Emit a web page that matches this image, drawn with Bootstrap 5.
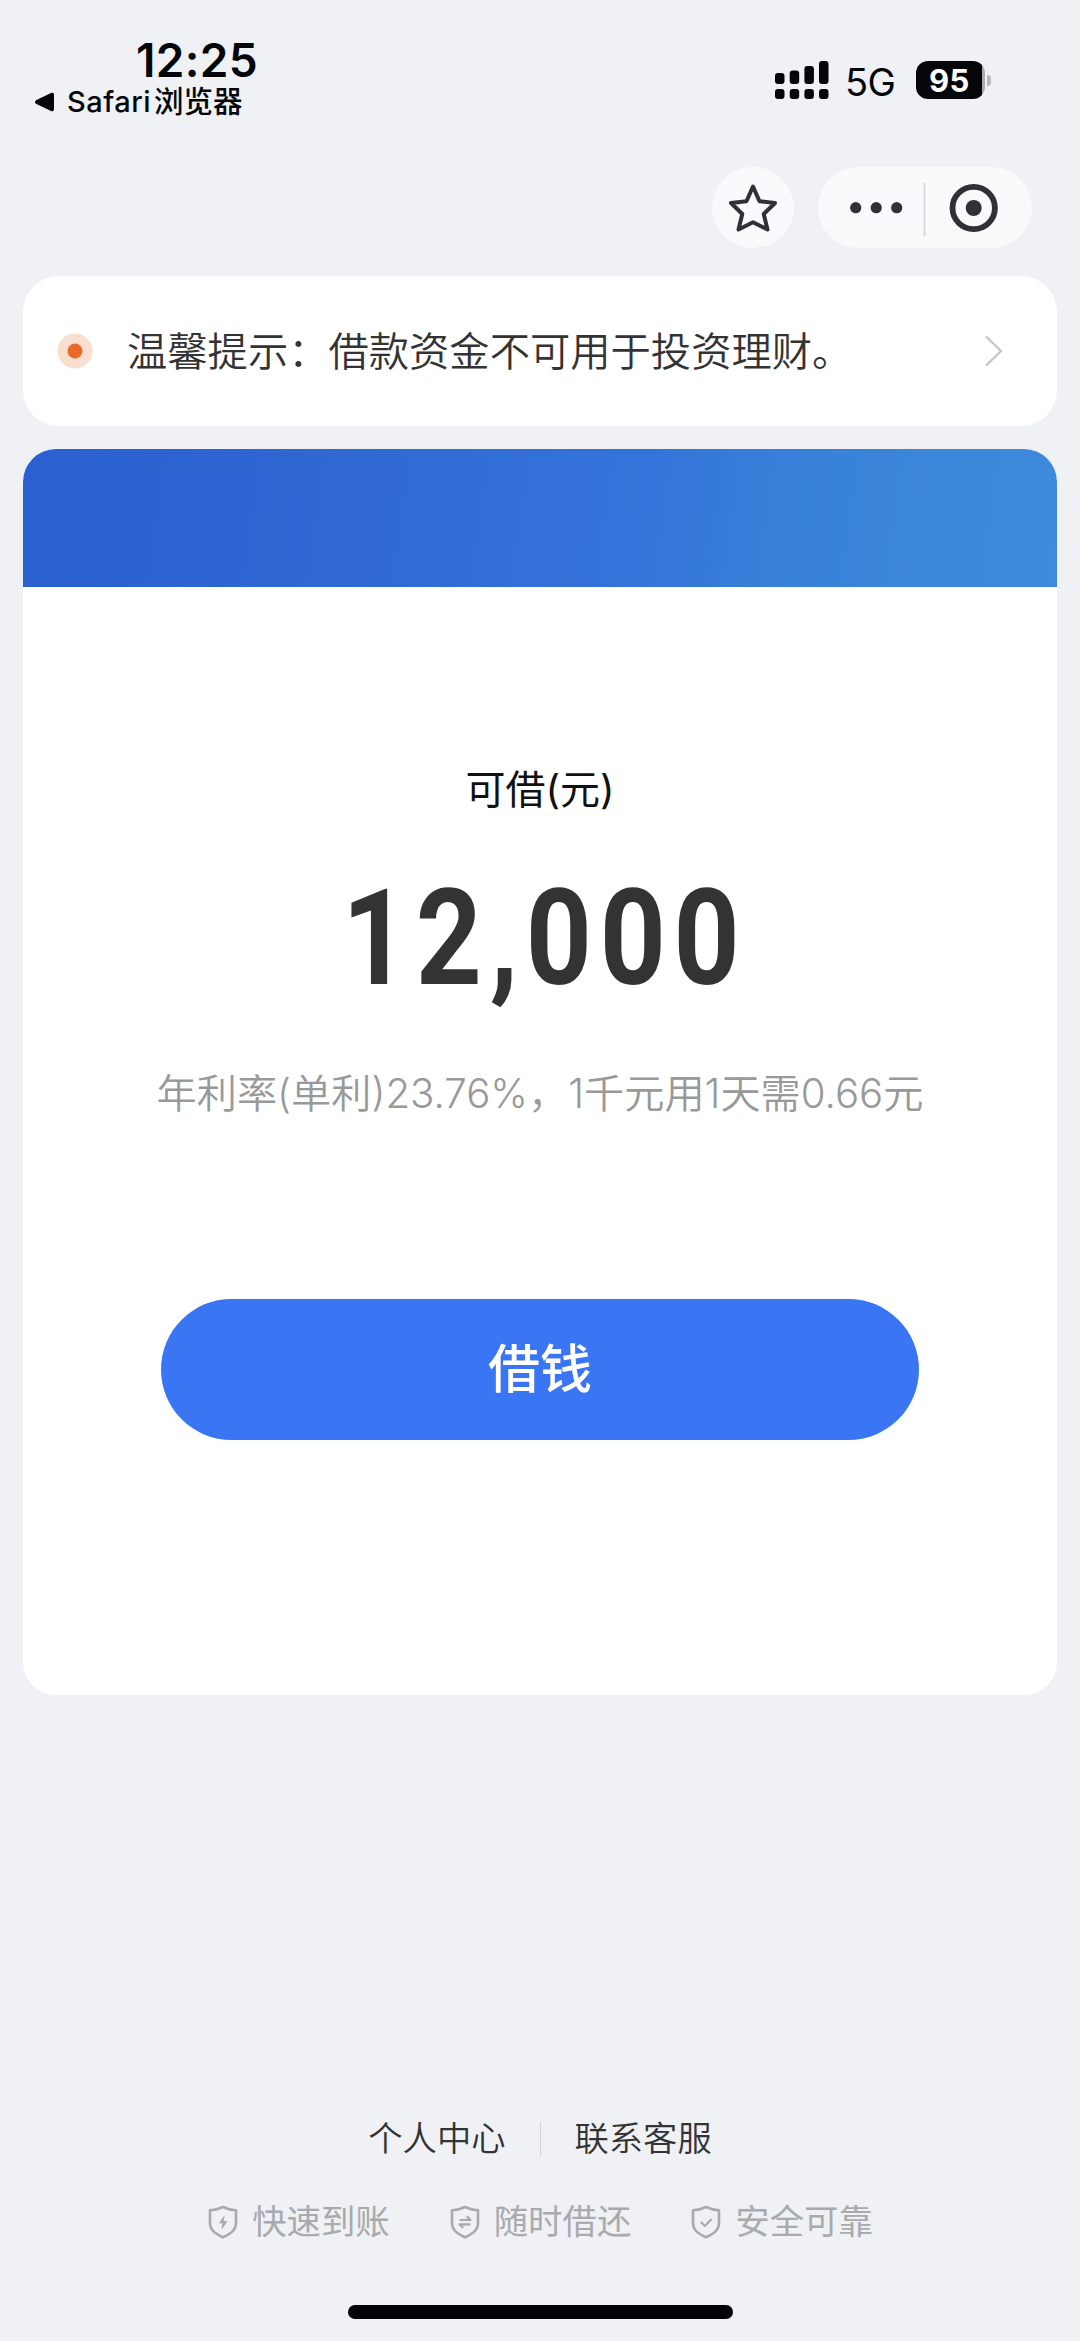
<!DOCTYPE html>
<html lang="zh-CN">
<head>
<meta charset="utf-8">
<meta name="viewport" content="width=device-width, initial-scale=1">
<title>借钱</title>
<link href="https://cdn.jsdelivr.net/npm/bootstrap@5.3.0/dist/css/bootstrap.min.css" rel="stylesheet">
<style>
  body { background: #f0f1f5; font-family: Inter, "Noto Sans CJK SC", sans-serif; color: #333; line-height: 1; }
  svg { display: block; flex: none; }
  .screen { width: 1080px; height: 2341px; overflow: hidden; }
  .status-bar { height: 140px; padding: 40px 89px 0 34px; color: #05060a; }
  .clock { font-size: 46px; font-weight: 600; line-height: 40px; padding-left: 102px; letter-spacing: .3px; }
  .back-app { margin-top: 7px; font-size: 29px; font-weight: 500; line-height: 29px; letter-spacing: .5px; gap: 12px; }
  .back-app .cjk { font-size: 29.500px; margin-left: -9px; letter-spacing: 0; }
  .status-icons { padding-top: 21px; height: 61px; }
  .network { font-size: 38px; line-height: 42px; margin-left: 16px; width: 71px; letter-spacing: -.5px; }
  .battery { width: 69px; height: 38px; border-radius: 12px; background: linear-gradient(90deg, #05060a 66px, #a9abb0 66px); color: #fff; font-size: 31px; font-weight: 700; line-height: 39px; padding-left: 13px; letter-spacing: .3px; }
  .battery-tip { width: 4px; height: 11px; border-radius: 0 5px 5px 0; background: #b4b6ba; margin: 14px 0 0 2px; }
  .mini-bar { height: 136px; padding: 27px 48px 0 0; gap: 24px; }
  .round-btn { width: 82px; height: 81px; background: #f8fafc; }
  .capsule { width: 214px; height: 81px; background: #f8fafc; }
  .sheet { margin: 0 23px; background: #fff; }
  .notice { height: 150px; border-radius: 36px; padding: 0 51px 0 34px; }
  .notice-text { font-size: 40.300px; margin-left: 34px; flex: 1; padding-top: 3px; font-weight: 350; }
  .loan { height: 1246px; margin-top: 23px; border-radius: 33px; overflow: hidden; }
  .banner { height: 138px; background: linear-gradient(98deg, #2a60d0 0%, #2f67d3 28%, #3474d9 60%, #3880d9 72%, #3e8adb 100%); }
  .loan-label { margin-top: 181px; font-size: 40px; line-height: 44px; color: #111; }
  .amount { margin-top: 60px; font-family: Roboto, sans-serif; font-weight: 700; font-size: 134px; line-height: 134px; letter-spacing: 9px; margin-right: -9px; transform: scaleX(.86); }
  .rate { margin-top: 64px; font-size: 40.200px; line-height: 48px; font-weight: 350; color: #999; white-space: nowrap; }
  .borrow-btn { margin-top: 181px; width: 758px; height: 141px; background: #3a75f3; color: #fff; font-size: 52px; font-weight: 500; line-height: 1; --bs-btn-hover-bg: #3168e2; }
  .foot-links { margin-top: 422px; font-size: 34.300px; line-height: 44px; gap: 34px; }
  .foot-links a { color: #333; text-decoration: none; font-weight: 350; }
  .foot-rule { width: 1px; height: 34px; background: #cfd1d6; }
  .promises { margin-top: 39px; font-size: 34.400px; line-height: 44px; color: #a9aaae; gap: 60px; padding-left: 1px; }
  .promises > div { gap: 14px; }
  .home-bar { width: 385px; height: 14px; border-radius: 7px; background: #020308; margin: 61px auto 0; }
</style>
</head>
<body>
<main class="screen d-flex flex-column">
  <header class="status-bar d-flex justify-content-between flex-shrink-0">
    <div>
      <div class="clock">12:25</div>
      <div class="back-app d-flex align-items-center">
        <svg width="21" height="20" viewBox="0 0 21 20"><path d="M2 8.200 17.500 .8Q20 0 20 3v14q0 3-2.500 2.200L2 11.800Q0 10 2 8.200Z" fill="#05060a"/></svg>
        <span>Safari</span><span class="cjk">浏览器</span>
      </div>
    </div>
    <div class="status-icons d-flex">
      <svg width="54" height="38" viewBox="0 0 54 38" fill="#05060a">
        <rect x="0" y="12" width="9.500" height="11" rx="3"/><rect x="14.700" y="9.500" width="9.500" height="13.500" rx="3"/><rect x="29.400" y="5" width="9.500" height="18" rx="3"/><rect x="44" y="0" width="9.500" height="23" rx="3"/>
        <rect x="0" y="28" width="9.500" height="10" rx="3"/><rect x="14.700" y="28" width="9.500" height="10" rx="3"/><rect x="29.400" y="28" width="9.500" height="10" rx="3"/><rect x="44" y="28" width="9.500" height="10" rx="3"/>
      </svg>
      <div class="network">5G</div>
      <div class="battery">95</div>
      <div class="battery-tip"></div>
    </div>
  </header>

  <nav class="mini-bar d-flex justify-content-end flex-shrink-0">
    <div class="round-btn rounded-circle d-flex align-items-center justify-content-center">
      <svg width="50" height="50" viewBox="0 0 50 50"><path d="M25 3.500 31.500 18.300 47 20 35.700 31 39.500 46.500 25 39.300 10.500 46.500 14.300 31 3 20 18.500 18.300Z" fill="none" stroke="#303136" stroke-width="4" stroke-linejoin="round"/></svg>
    </div>
    <div class="capsule rounded-pill">
      <svg width="214" height="81" viewBox="0 0 214 81" fill="#303136"><circle cx="37.700" cy="40.700" r="5.600"/><circle cx="58.200" cy="40.700" r="5.600"/><circle cx="78.700" cy="40.700" r="5.600"/><path d="M106.500 16v53" stroke="#d8dade" stroke-width="2"/><circle cx="155.700" cy="41" r="21.200" fill="none" stroke="#303136" stroke-width="5.800"/><circle cx="155.700" cy="41" r="8"/></svg>
    </div>
  </nav>

  <section class="sheet notice d-flex align-items-center flex-shrink-0">
    <svg width="36" height="36" viewBox="0 0 36 36"><circle cx="18" cy="18" r="17.500" fill="#fadfd0"/><circle cx="18" cy="18" r="7.500" fill="#ea6a2a"/></svg>
    <div class="notice-text">温馨提示：借款资金不可用于投资理财。</div>
    <svg width="22" height="34" viewBox="0 0 22 34"><path d="M2 2.500 17 17 2 31.500" fill="none" stroke="#c4c4c6" stroke-width="2.200"/></svg>
  </section>

  <section class="sheet loan d-flex flex-column align-items-center flex-shrink-0">
    <div class="banner w-100"></div>
    <div class="loan-label">可借(元)</div>
    <div class="amount">12,000</div>
    <div class="rate">年利率(单利)23.76%，1千元用1天需0.66元</div>
    <button type="button" class="borrow-btn btn rounded-pill border-0 p-0">借钱</button>
  </section>

  <footer class="flex-shrink-0">
    <div class="foot-links d-flex justify-content-center align-items-center">
      <a href="#">个人中心</a><span class="foot-rule"></span><a href="#">联系客服</a>
    </div>
    <div class="promises d-flex justify-content-center">
      <div class="d-flex align-items-center">
        <svg width="30" height="34" viewBox="0 0 30 34" fill="none" stroke="#a9aaae" stroke-width="2.600" stroke-linejoin="round"><path d="M15 2Q21.500 5 28 5.300V18C28 26 21 29.500 15 32.300 9 29.500 2 26 2 18V5.300Q8.500 5 15 2Z"/><path d="M16.600 10 10.800 18.200h3.600L13.600 24.800 19.600 16h-3.800Z" fill="#a9aaae" stroke="none"/></svg>
        <span>快速到账</span>
      </div>
      <div class="d-flex align-items-center">
        <svg width="30" height="34" viewBox="0 0 30 34" fill="none" stroke="#a9aaae" stroke-width="2.600" stroke-linejoin="round"><path d="M15 2Q21.500 5 28 5.300V18C28 26 21 29.500 15 32.300 9 29.500 2 26 2 18V5.300Q8.500 5 15 2Z"/><path d="M9.500 15H20.500L16.800 11.400M20.500 19.300H9.500L13.200 22.900" stroke-width="2.200"/></svg>
        <span>随时借还</span>
      </div>
      <div class="d-flex align-items-center">
        <svg width="30" height="34" viewBox="0 0 30 34" fill="none" stroke="#a9aaae" stroke-width="2.600" stroke-linejoin="round"><path d="M15 2Q21.500 5 28 5.300V18C28 26 21 29.500 15 32.300 9 29.500 2 26 2 18V5.300Q8.500 5 15 2Z"/><path d="M9.800 17 14 21 20.500 14" stroke-width="2.200"/></svg>
        <span>安全可靠</span>
      </div>
    </div>
    <div class="home-bar"></div>
  </footer>
</main>
<script src="https://cdn.jsdelivr.net/npm/bootstrap@5.3.0/dist/js/bootstrap.bundle.min.js"></script>
</body>
</html>
